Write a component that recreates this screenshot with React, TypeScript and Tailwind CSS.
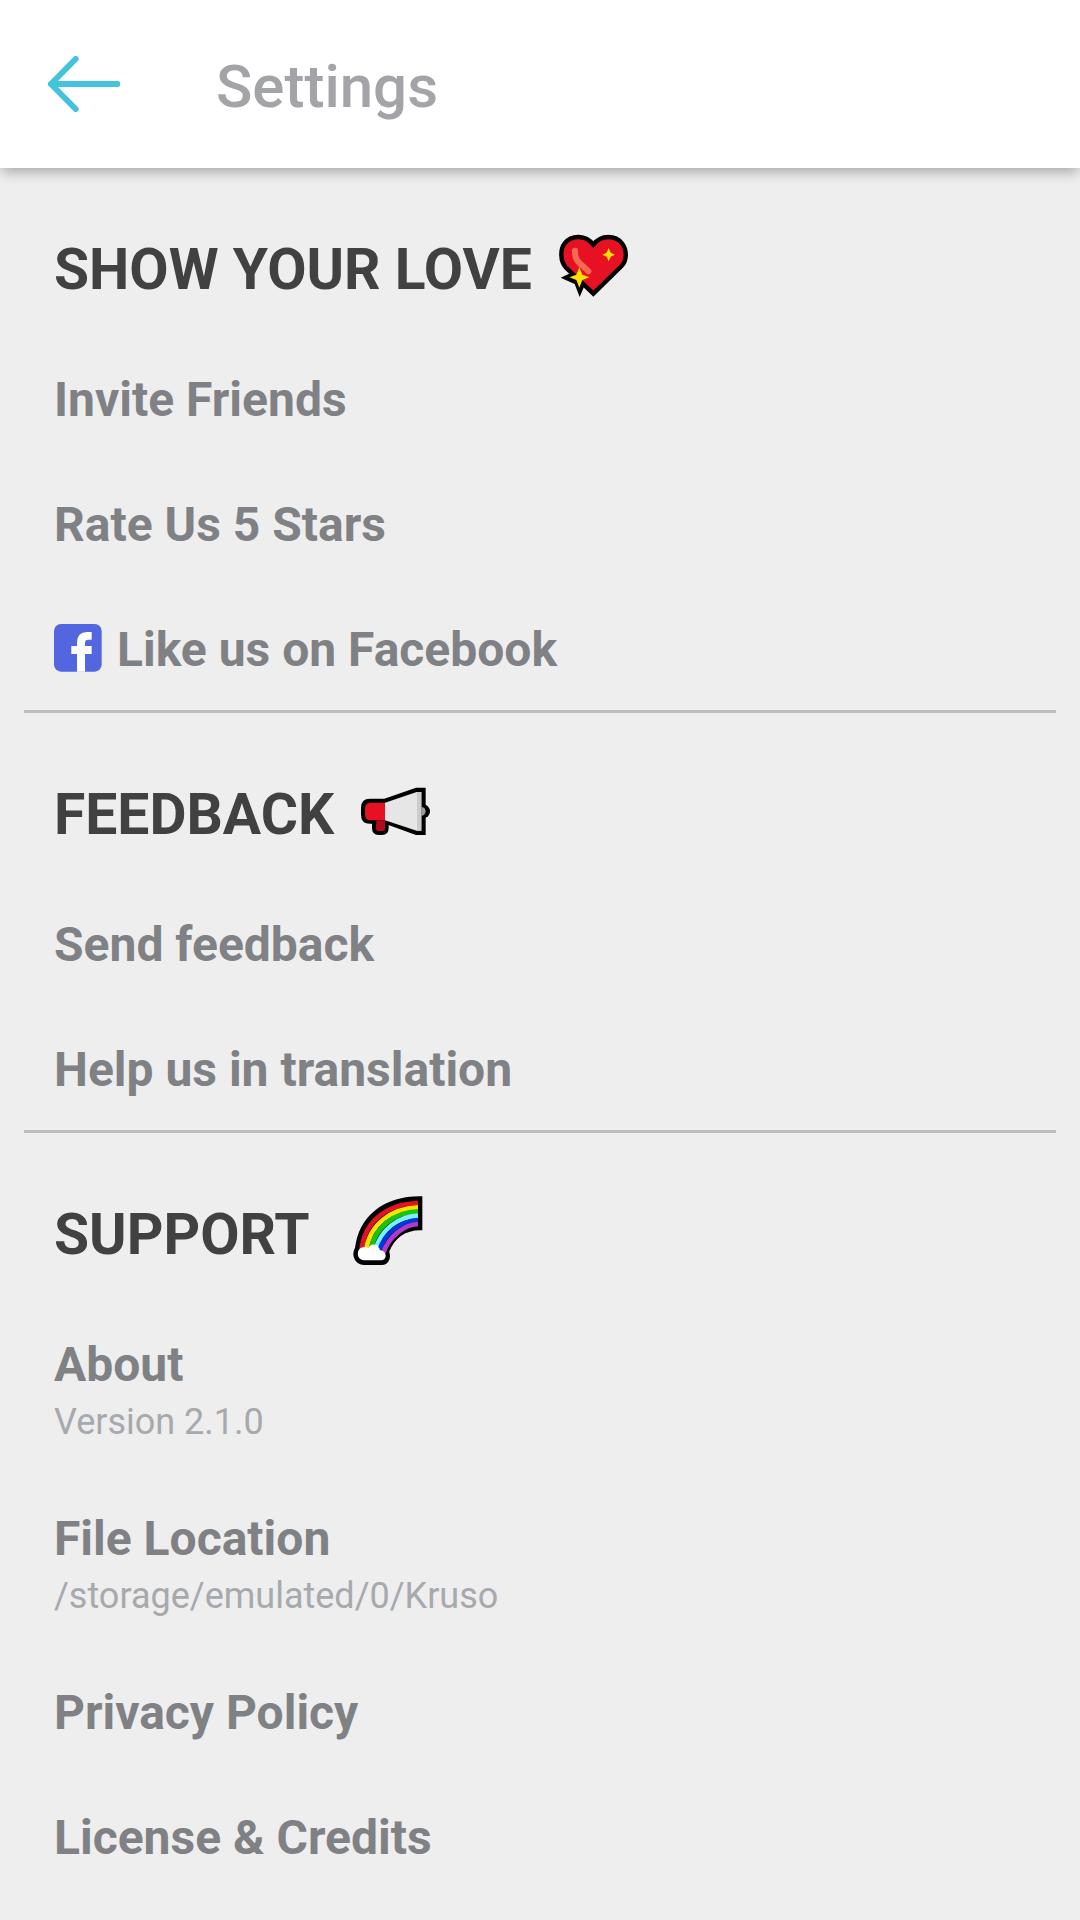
import React from 'react';

const BackArrow = () => (
    <svg viewBox="144 168 216 168" className="h-14 w-[72px]" fill="none" stroke="#45c3dc" strokeWidth="18" strokeLinecap="round" strokeLinejoin="round">
        <path d="M227 177L153 252L227 327M153 252H352" />
    </svg>
);

const HeartIcon = () => (
    <svg viewBox="54 30 216 216" className="mb-2 size-[72px] shrink-0">
        <path d="M62 173L98 156L150 190L134 196L119 231L104 192Z" fill="#000" />
        <path
            d="M160 221L78 143C60 124 60 88 74 70C95 44 137 44 160 74C184 43 226 45 246 70C262 91 261 122 244 139Z"
            fill="#e81123" stroke="#000" strokeWidth="13"
        />
        <path d="M105 92C103 126 125 132 145 154" fill="none" stroke="#f4694f" strokeWidth="18" strokeLinecap="round" />
        <path d="M118 142L127 164L148 172L127 180L118 203L109 180L88 172L109 164Z" fill="#ffe100" />
        <path d="M206 84L212 98L225 104L212 110L206 124L200 110L187 104L200 98Z" fill="#ffe100" />
    </svg>
);

const MegaphoneIcon = () => (
    <svg viewBox="48 15 216 216" className="mb-2 size-[72px] shrink-0">
        <circle cx="237" cy="124" r="21" fill="#000" />
        <path d="M90 150V174Q90 189 104 189H114Q128 189 128 174V152" fill="#b00b1a" stroke="#000" strokeWidth="12" />
        <path d="M123 92L217 59H239V189H217L123 155H78Q57 155 57 134V113Q57 92 78 92Z" fill="#000" stroke="#000" strokeWidth="12" />
        <path d="M123 98V151H80Q63 151 63 133V116Q63 98 80 98Z" fill="#e81123" />
        <path d="M97 151H123V176Q123 182 117 182H103Q97 182 97 176Z" fill="#b00b1a" />
        <path d="M123 98L218 66H232V182H218L123 151Z" fill="#e6e6e6" />
        <path d="M219 66H232V182H219Z" fill="#ccc" />
        <path d="M232 111A13 13 0 0 1 232 137Z" fill="#999" />
    </svg>
);

const RainbowIcon = () => (
    <svg viewBox="38 47 216 216" className="mb-2 size-[72px] shrink-0">
        <path
            d="M243 57C135 57 64 114 53 207C42 224 50 251 74 251H127C144 251 150 232 143 217C160 175 194 147 243 147Z"
            fill="#000" stroke="#000" strokeWidth="12" strokeLinejoin="miter"
        />
        <g fill="none" strokeWidth="14">
            <path d="M236 71C143 74 76 126 67 210" stroke="#e81123" />
            <path d="M236 84C155 88 91 134 80 214" stroke="#ffe100" />
            <path d="M236 96C166 99 108 140 93 214" stroke="#16c60c" />
            <path d="M236 109C174 113 126 149 107 214" stroke="#7af0ff" />
            <path d="M236 122C183 126 138 159 120 214" stroke="#0037da" />
            <path d="M236 134C190 138 149 172 132 220" stroke="#b33ac6" />
        </g>
        <path d="M74 243C50 242 50 206 71 204C79 202 83 204 87 207C92 192 116 190 122 213C144 214 144 243 126 243Z" fill="#fff" />
    </svg>
);

const FacebookIcon = () => (
    <svg viewBox="103 70 144 144" className="mb-1 size-12 shrink-0">
        <rect x="103" y="70" width="143" height="143" rx="21" fill="#5267df" />
        <path d="M172 213V160H155V136H172V126Q172 94 202 94H216V117H206Q196 117 196 127V136H216V160H196V213Z" fill="#fff" />
    </svg>
);

type Item = { label: string; detail?: string; icon?: React.ReactNode };

const sections: { title: string; gap: string; icon: React.ReactNode; items: Item[] }[] = [
    {
        title: 'SHOW YOUR LOVE',
        gap: 'gap-[26px]',
        icon: <HeartIcon />,
        items: [
            { label: 'Invite Friends' },
            { label: 'Rate Us 5 Stars' },
            { label: 'Like us on Facebook', icon: <FacebookIcon /> },
        ],
    },
    {
        title: 'FEEDBACK',
        gap: 'gap-[26px]',
        icon: <MegaphoneIcon />,
        items: [{ label: 'Send feedback' }, { label: 'Help us in translation' }],
    },
    {
        title: 'SUPPORT',
        gap: 'gap-[42px]',
        icon: <RainbowIcon />,
        items: [
            { label: 'About', detail: 'Version 2.1.0' },
            { label: 'File Location', detail: '/storage/emulated/0/Kruso' },
            { label: 'Privacy Policy' },
            { label: 'License & Credits' },
        ],
    },
];

const Row = ({ label, detail, icon }: Item) => (
    <button type="button" className={`block w-full px-[54px] pt-9 text-left ${detail ? 'pb-[22px]' : 'pb-8'}`}>
        <span className="flex items-center gap-[15px] text-[48px] leading-[57px] font-bold text-[#808184]">
            {icon}
            {label}
        </span>
        {detail && <span className="block text-[36px] leading-[59px] text-[#a7a9ac]">{detail}</span>}
    </button>
);

const App = () => {
    return (
        <div className="min-h-screen bg-[#eeeeee] font-['Roboto',sans-serif]">
            <header className="flex h-[168px] items-center gap-24 bg-white px-12 shadow-[0_6px_12px_-2px_rgba(0,0,0,0.3)]">
                <button type="button" aria-label="Back">
                    <BackArrow />
                </button>
                <h1 className="pt-1.5 text-[60px] leading-[60px] font-medium text-[#a3a4a8]">Settings</h1>
            </header>
            <main>
                {sections.map((section, index) => (
                    <section key={section.title}>
                        {index > 0 && <hr className="mx-6 border-t-3 border-[#bdbdbd]" />}
                        <div className={`flex h-[167px] items-center px-[54px] pt-16 pb-7 ${section.gap}`}>
                            <h2 className="text-[57px] leading-[75px] font-bold text-[#414142]">{section.title}</h2>
                            {section.icon}
                        </div>
                        {section.items.map((item) => (
                            <Row key={item.label} {...item} />
                        ))}
                    </section>
                ))}
            </main>
        </div>
    );
};

export default App;
